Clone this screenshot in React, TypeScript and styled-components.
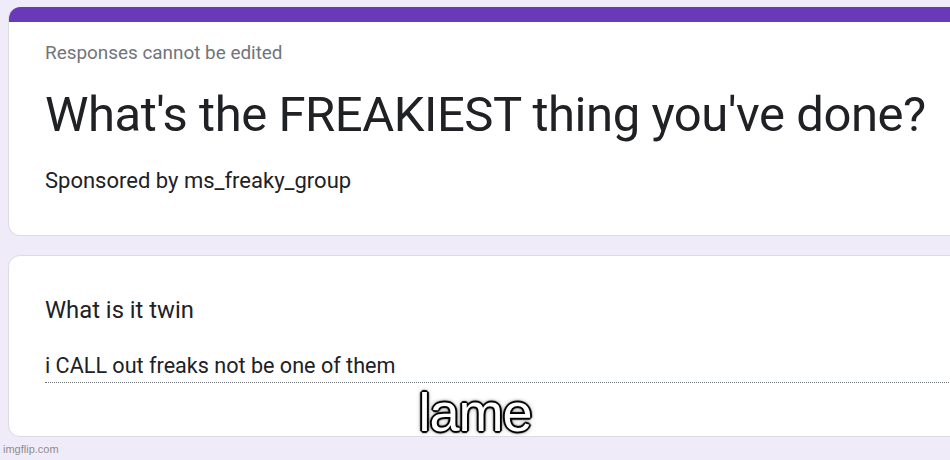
import React from 'react';
import styled, { createGlobalStyle } from 'styled-components';

const GlobalStyle = createGlobalStyle`
  html, body {
    margin: 0;
    padding: 0;
    background: #f0ebf8;
    overflow: hidden;
  }
  body {
    font-family: Roboto, "Liberation Sans", sans-serif;
  }
`;

const Page = styled.div`
  position: relative;
  width: 950px;
  height: 460px;
  overflow: hidden;
  background: #f0ebf8;
  padding: 7px 0 0 8px;
  box-sizing: border-box;
  display: flex;
  flex-direction: column;
  gap: 19px;
`;

const Card = styled.div<{ $height: number; $accent?: boolean }>`
  width: 980px;
  height: ${(p) => p.$height}px;
  box-sizing: border-box;
  background: #fff;
  border: 1px solid #dadce0;
  border-radius: 12px;
  overflow: hidden;
  display: flex;
  flex-direction: column;
  ${(p) => p.$accent && `border-top: none;`}
`;

const AccentBar = styled.div`
  height: 15px;
  background: #673ab7;
  flex-shrink: 0;
`;

const CardBody = styled.div<{ $pad: string }>`
  padding: ${(p) => p.$pad};
  display: flex;
  flex-direction: column;
`;

const Note = styled.div`
  font-size: 18.9px;
  color: #70757a;
  line-height: 22px;
`;

const Title = styled.h1`
  margin: 23px 0 0;
  font-size: 49px;
  font-weight: 400;
  letter-spacing: -0.45px;
  color: #202124;
  line-height: 56px;
  white-space: nowrap;
`;

const Subtitle = styled.div`
  margin-top: 25px;
  font-size: 22px;
  color: #202124;
  line-height: 26px;
`;

const Question = styled.div`
  font-size: 23.8px;
  color: #202124;
  line-height: 28px;
`;

const Answer = styled.div`
  margin-top: 29px;
  font-size: 21.6px;
  color: #202124;
  line-height: 26px;
  padding-bottom: 3px;
  border-bottom: 1px dotted #70757a;
`;

const Caption = styled.div`
  position: absolute;
  left: 0;
  right: 0;
  top: 381px;
  text-align: center;
  font-family: "Liberation Sans", Arial, sans-serif;
  font-size: 54px;
  line-height: normal;
  color: #fff;
  letter-spacing: -1px;
  text-shadow:
    2px 0 1px #000, -2px 0 1px #000, 0 2px 1px #000, 0 -2px 1px #000,
    1px 1px 1px #000, -1px -1px 1px #000, 1px -1px 1px #000, -1px 1px 1px #000,
    0 0 5px rgba(0, 0, 0, 0.8);
`;

const Watermark = styled.div`
  position: absolute;
  left: 3px;
  bottom: 5px;
  font-family: "Liberation Sans", Arial, sans-serif;
  font-size: 11px;
  color: #8e8e8e;
`;

export default function App() {
  return (
    <>
      <GlobalStyle />
      <Page>
        <Card $height={229} $accent>
          <AccentBar />
          <CardBody $pad="20px 0 0 36px">
            <Note>Responses cannot be edited</Note>
            <Title>What's the FREAKIEST thing you've done?</Title>
            <Subtitle>Sponsored by ms_freaky_group</Subtitle>
          </CardBody>
        </Card>
        <Card $height={182}>
          <CardBody $pad="40px 0 0 36px">
            <Question>What is it twin</Question>
            <Answer>i CALL out freaks not be one of them</Answer>
          </CardBody>
        </Card>
        <Caption>lame</Caption>
        <Watermark>imgflip.com</Watermark>
      </Page>
    </>
  );
}
